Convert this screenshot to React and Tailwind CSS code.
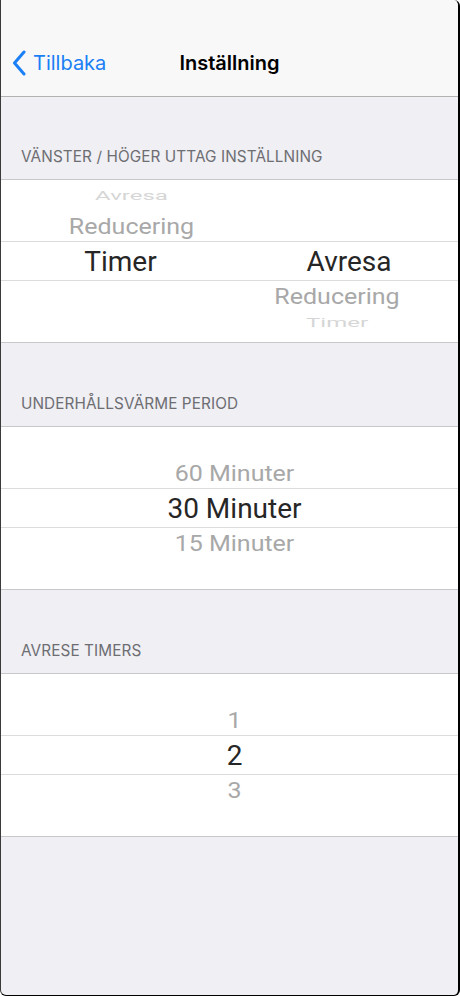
const pickerFont = { fontFamily: "Roboto, 'Noto Sans', sans-serif" };

function Chevron() {
  return (
    <svg width="14" height="26" viewBox="0 0 14 26" fill="none">
      <polyline points="12,2 2.5,13 12,24" stroke="#1b7ff5" strokeWidth="3" strokeLinecap="round" strokeLinejoin="round" />
    </svg>
  );
}

function NavBar() {
  return (
    <div className="h-[97px] shrink-0 border-b border-[#b2b2b2] bg-[#f8f8f8] pt-[40px]">
      <div className="grid h-[46px] grid-cols-[1fr_auto_1fr] items-center px-[11px]">
        <button className="flex items-center gap-[7px] text-[20px] text-[#1b7ff5]">
          <Chevron />
          <span>Tillbaka</span>
        </button>
        <div className="text-[20px] font-semibold text-black">Inställning</div>
        <div />
      </div>
    </div>
  );
}

function SectionHeader({ title, first }) {
  return (
    <div className={`${first ? "h-[82px]" : "h-[83px]"} flex shrink-0 items-end px-[20px] pb-[14px]`}>
      <span className="text-[15.3px] leading-[16px] tracking-[0.1px] text-[#6d6d72]">{title}</span>
    </div>
  );
}

// wheel picker: far/adjacent rows above and below the selection band
function Picker({ columns, grid }) {
  const cells = (zone) =>
    columns.map((c, i) => {
      if (zone === "top") {
        return (
          <div key={i} className="flex h-full flex-col justify-end">
            <div className={`flex h-[30px] items-center justify-center overflow-hidden ${c.shift}`}>
              {c.above[0] && <span className="scale-y-[0.55] text-[24px] leading-none text-[#d6d6d6]">{c.above[0]}</span>}
            </div>
            <div className={`flex h-[30px] items-center justify-center ${c.shift}`}>
              {c.above[1] && <span className="scale-y-[0.88] text-[25px] leading-none text-[#a8a8a8]">{c.above[1]}</span>}
            </div>
          </div>
        );
      }
      if (zone === "mid") {
        return (
          <div key={i} className="flex h-full items-center justify-center pt-[2px]">
            <span className="text-[28px] leading-none text-[#262626]">{c.selected}</span>
          </div>
        );
      }
      return (
        <div key={i} className="flex h-full flex-col justify-start">
          <div className={`flex h-[30px] items-center justify-center ${c.shift}`}>
            {c.below[0] && <span className="scale-y-[0.88] text-[25px] leading-none text-[#a8a8a8]">{c.below[0]}</span>}
          </div>
          <div className={`flex h-[24px] items-center justify-center overflow-hidden ${c.shift}`}>
            {c.below[1] && <span className="scale-y-[0.55] text-[24px] leading-none text-[#d6d6d6]">{c.below[1]}</span>}
          </div>
        </div>
      );
    });

  return (
    <div className="h-[164px] shrink-0 border-y border-[#c8c7cc] bg-white" style={pickerFont}>
      <div className={`grid h-[61px] ${grid}`}>{cells("top")}</div>
      <div className={`grid h-[40px] border-y border-[#dcdcdc] ${grid}`}>{cells("mid")}</div>
      <div className={`grid h-[61px] ${grid}`}>{cells("bottom")}</div>
    </div>
  );
}

export default function App() {
  const outlet = [
    { above: ["Avresa", "Reducering"], selected: "Timer", below: [], shift: "translate-x-[11px]" },
    { above: [], selected: "Avresa", below: ["Reducering", "Timer"], shift: "-translate-x-[12px]" },
  ];
  const period = [{ above: ["", "60 Minuter"], selected: "30 Minuter", below: ["15 Minuter", ""], shift: "" }];
  const timers = [{ above: ["", "1"], selected: "2", below: ["3", ""], shift: "" }];

  return (
    <div
      className="flex h-[996px] flex-col overflow-hidden rounded-tr-[6px] rounded-b-[6px] border-b border-l border-r-2 border-b-black border-l-[#3a3a3a] border-r-black bg-[#efeff4]"
      style={{ fontFamily: "Inter, 'Noto Sans', sans-serif" }}
    >
      <NavBar />
      <SectionHeader first title="VÄNSTER / HÖGER UTTAG INSTÄLLNING" />
      <Picker columns={outlet} grid="grid-cols-[239px_1fr]" />
      <SectionHeader title="UNDERHÅLLSVÄRME PERIOD" />
      <Picker columns={period} grid="grid-cols-1 pl-[10px]" />
      <SectionHeader title="AVRESE TIMERS" />
      <Picker columns={timers} grid="grid-cols-1 pl-[10px]" />
      <div className="flex-1" />
    </div>
  );
}
